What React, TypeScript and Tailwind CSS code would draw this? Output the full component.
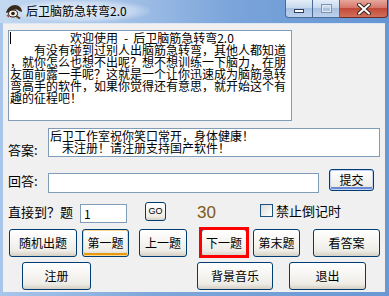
import React from "react";

const btn =
  "flex items-center justify-center rounded-[3px] border border-[#003c74] bg-[linear-gradient(180deg,#ffffff_0%,#f6f5f1_45%,#eeece5_80%,#d6d0c4_100%)] text-[12px] leading-none text-black";

function TitleIcon() {
  return (
    <svg width="18" height="15" viewBox="0 0 18 15">
      <path d="M1 9 C2 4 6 1 10 1 C14 1 17 4 17 8 L14 7 C12 5 8 5 5 8 Z" fill="#3a2a1c" />
      <ellipse cx="8" cy="9.5" rx="4.5" ry="3.5" fill="#f4efe6" stroke="#2a1e14" strokeWidth="1" />
      <circle cx="8" cy="9.5" r="1.8" fill="#2a1e14" />
      <path d="M11 12 L15 14.5" stroke="#5a3a20" strokeWidth="2" />
      <path d="M2 11 L4 13" stroke="#c04030" strokeWidth="1.5" />
    </svg>
  );
}

export default function App() {
  return (
    <div className="w-[389px] h-[296px] flex flex-col overflow-hidden bg-[linear-gradient(90deg,#a9c6ea_0%,#7ea6da_40%,#6a98d4_100%)] font-['Noto_Sans_CJK_SC','Noto_Sans',sans-serif]">
      {/* Title bar */}
      <div className="relative h-[23px] flex items-start bg-[linear-gradient(90deg,#c4d9f1_0%,#a6c3e8_30%,#7aa4da_60%,#6495d3_100%)]">
        <div className="absolute left-[10px] top-[0px] w-[140px] h-[22px] rounded-full bg-[radial-gradient(ellipse_at_center,rgba(255,255,255,0.75)_0%,rgba(255,255,255,0.35)_55%,rgba(255,255,255,0)_75%)]" />
        <div className="relative ml-[5px] mt-[4px]">
          <TitleIcon />
        </div>
        <div className="relative ml-[3px] mt-[3px] text-[12px] leading-[16px] text-black">后卫脑筋急转弯2.0</div>
        <div className="ml-auto mr-[1px] flex h-[18px]">
          <div className="w-[28px] h-[18px] rounded-bl-[4px] border border-t-0 border-[#4b6a96] bg-[linear-gradient(180deg,#e4edf8_0%,#c8d9ee_45%,#a9c2e2_50%,#bcd2ee_100%)] flex items-end justify-center pb-[4px]">
            <div className="w-[10px] h-[4px] bg-white border border-[#2c3e5c]" />
          </div>
          <div className="w-[27px] h-[18px] border border-l-0 border-t-0 border-[#4b6a96] bg-[linear-gradient(180deg,#e4edf8_0%,#c8d9ee_45%,#a9c2e2_50%,#bcd2ee_100%)] flex items-center justify-center">
            <div className="w-[11px] h-[9px] border border-[#7f93ae] bg-transparent shadow-[inset_0_0_0_1px_#dfe8f3]" />
          </div>
          <div className="w-[48px] h-[18px] rounded-br-[4px] border border-l-0 border-t-0 border-[#6b2a22] bg-[linear-gradient(180deg,#e6a89c_0%,#d7766a_45%,#c24a38_50%,#d2705c_100%)] flex items-center justify-center">
            <svg width="14" height="12" viewBox="0 0 14 12">
              <path d="M2 1.5 L12 10.5 M12 1.5 L2 10.5" stroke="#3b2420" strokeWidth="4" strokeLinecap="round" />
              <path d="M2 1.5 L12 10.5 M12 1.5 L2 10.5" stroke="#ffffff" strokeWidth="2" strokeLinecap="round" />
            </svg>
          </div>
        </div>
      </div>

      {/* Client area */}
      <div className="ml-[3px] mr-[4px] h-[269px] bg-[#f0f0f0] border-t border-[#dde7f3] flex flex-col text-black">
        {/* Welcome textarea */}
        <div className="ml-[5px] mt-[6px] w-[284px] h-[91px] border border-[#7f9db9] bg-white pl-[1px] pt-[1px] text-[12px] leading-[12px]">
          <div className="flex items-start h-[12px]">
            <div className="w-[1px] h-[12px] bg-black ml-[0px]" />
            <span className="ml-[59px]">欢迎使用</span>
            <span className="ml-[6px]">-</span>
            <span className="ml-[5px]">后卫脑筋急转弯2.0</span>
          </div>
          <div className="pl-[24px] whitespace-nowrap">有没有碰到过别人出脑筋急转弯，其他人都知道</div>
          <div className="whitespace-nowrap">，就你怎么也想不出呢？想不想训练一下脑力，在朋</div>
          <div className="whitespace-nowrap">友面前露一手呢？这就是一个让你迅速成为脑筋急转</div>
          <div className="whitespace-nowrap">弯高手的软件，如果你觉得还有意思，就开始这个有</div>
          <div className="whitespace-nowrap">趣的征程吧！</div>
        </div>

        {/* Answer row */}
        <div className="mt-[7px] flex items-center h-[29px]">
          <div className="ml-[5px] w-[40px] text-[13px] leading-none mt-[14px]">答案:</div>
          <div className="w-[332px] h-[29px] border border-[#7f9db9] bg-white pl-[1px] pt-[1px] text-[12px] leading-[12px]">
            <div className="whitespace-nowrap">后卫工作室祝你笑口常开，身体健康！</div>
            <div className="pl-[12px] whitespace-nowrap">未注册！请注册支持国产软件！</div>
          </div>
        </div>

        {/* Reply row */}
        <div className="mt-[12px] flex items-start h-[22px]">
          <div className="ml-[5px] w-[40px] mt-[5px] text-[13px] leading-none">回答:</div>
          <div className="mt-[4px] w-[271px] h-[20px] border border-[#7f9db9] bg-white" />
          <div className={btn + " ml-[10px] w-[45px] h-[22px] shadow-[inset_0_0_0_1px_#c4d4f4,inset_0_-2px_0_1px_#6a8ad8]"}>提交</div>
        </div>

        {/* Jump row */}
        <div className="mt-[11px] flex items-start h-[22px]">
          <div className="ml-[5px] w-[72px] mt-[3px] text-[13px] leading-none">直接到？题</div>
          <div className="mt-[2px] w-[47px] h-[19px] border border-[#7f9db9] bg-white pl-[3px] text-[12px] leading-[17px]">1</div>
          <div className={btn + " ml-[18px] w-[21px] h-[19px] !text-[9px] font-['Liberation_Sans',sans-serif]"}>GO</div>
          <div className="ml-[31px] mt-[2px] text-[17px] leading-[18px] text-[#7d5a17] font-['Liberation_Sans',sans-serif]">30</div>
          <div className="ml-[44px] mt-[2px] w-[13px] h-[13px] border border-[#1c5180] bg-[linear-gradient(135deg,#dcdcd7_0%,#ffffff_100%)]" />
          <div className="ml-[3px] mt-[1px] text-[13px] leading-[15px]">禁止倒记时</div>
        </div>

        {/* Buttons row 1 */}
        <div className="mt-[5px] flex items-start h-[28px]">
          <div className={btn + " ml-[6px] w-[68px] h-[28px]"}>随机出题</div>
          <div className={btn + " ml-[5px] w-[47px] h-[28px] shadow-[inset_0_0_0_1px_#fbd78f,inset_0_-2px_0_1px_#e59a12]"}>第一题</div>
          <div className={btn + " ml-[10px] w-[48px] h-[28px]"}>上一题</div>
          <div className="relative ml-[14px] w-[46px] h-[28px]">
            <div className={btn + " w-[46px] h-[28px]"}>下一题</div>
            <div className="absolute left-[-2px] top-[-2px] w-[50px] h-[31px] border-[3px] border-[#ff0000]" />
          </div>
          <div className={btn + " ml-[6px] w-[47px] h-[28px]"}>第末题</div>
          <div className={btn + " ml-[13px] w-[67px] h-[28px]"}>看答案</div>
        </div>

        {/* Buttons row 2 */}
        <div className="mt-[5px] flex items-start h-[28px]">
          <div className={btn + " ml-[19px] w-[69px] h-[28px]"}>注册</div>
          <div className={btn + " ml-[106px] w-[76px] h-[28px]"}>背景音乐</div>
          <div className={btn + " ml-[16px] w-[77px] h-[28px]"}>退出</div>
        </div>
      </div>
      <div className="h-[4px]" />
    </div>
  );
}
